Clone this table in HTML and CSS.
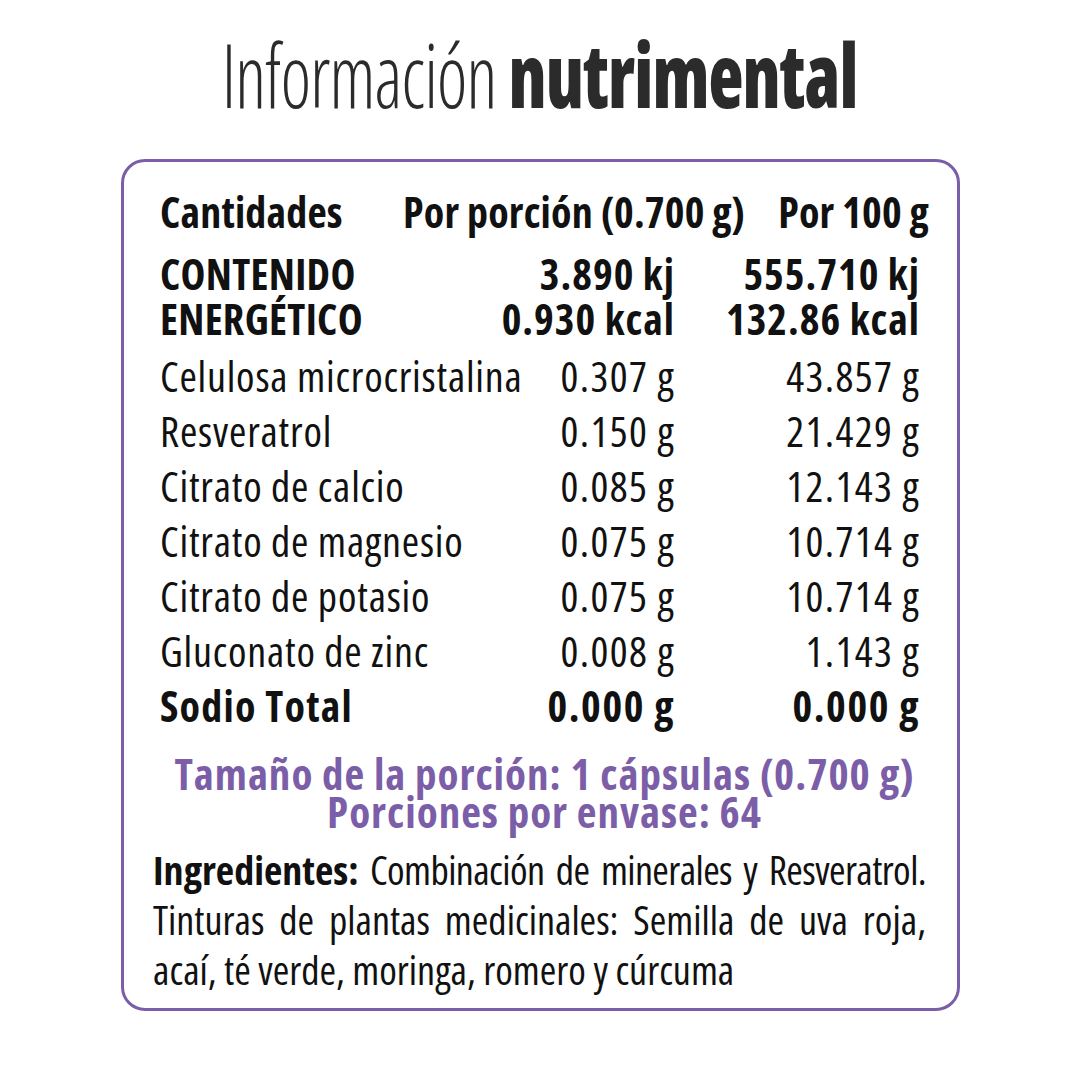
FILE: index.html
```html
<!DOCTYPE html>
<html lang="es">
<head>
<meta charset="utf-8">
<title>Información nutrimental</title>
<link rel="stylesheet" href="styles.css">
</head>
<body>
<h1 class="title"><span class="title-inner"><span class="light">Información</span> <span class="heavy">nutrimental</span></span></h1>
<section class="panel">
  <div class="head">
    <span>Cantidades</span>
    <span>Por porción (0.700 g)</span>
    <span class="head-end">Por 100 g</span>
  </div>
  <div class="energy">
    <div class="cell">CONTENIDO<br>ENERGÉTICO</div>
    <div class="cell num">3.890 kj<br>0.930 kcal</div>
    <div class="cell num">555.710 kj<br>132.86 kcal</div>
  </div>
  <div class="rows">
    <div class="cell">Celulosa microcristalina</div><div class="cell num">0.307 g</div><div class="cell num">43.857 g</div>
    <div class="cell">Resveratrol</div><div class="cell num">0.150 g</div><div class="cell num">21.429 g</div>
    <div class="cell">Citrato de calcio</div><div class="cell num">0.085 g</div><div class="cell num">12.143 g</div>
    <div class="cell">Citrato de magnesio</div><div class="cell num">0.075 g</div><div class="cell num">10.714 g</div>
    <div class="cell">Citrato de potasio</div><div class="cell num">0.075 g</div><div class="cell num">10.714 g</div>
    <div class="cell">Gluconato de zinc</div><div class="cell num">0.008 g</div><div class="cell num">1.143 g</div>
    <div class="cell bold">Sodio Total</div><div class="cell num bold">0.000 g</div><div class="cell num bold">0.000 g</div>
  </div>
  <div class="serving">
    <div>Tamaño de la porción: 1 cápsulas (0.700 g)</div>
    <div>Porciones por envase: 64</div>
  </div>
  <div class="ingredients">
    <span class="line first"><b>Ingredientes:</b> Combinación de minerales y Resveratrol.</span>
    <span class="line">Tinturas de plantas medicinales: Semilla de uva roja,</span>
    <span class="last">acaí, té verde, moringa, romero y cúrcuma</span>
  </div>
</section>
</body>
</html>
```
FILE: styles.css
```css
html, body {
  margin: 0;
  padding: 0;
  background: #ffffff;
}
body {
  width: 1080px;
  height: 1080px;
  font-family: "Open Sans", "DejaVu Sans", sans-serif;
  font-stretch: 75%;
  color: #111111;
}
.title {
  margin: 24px 0 35px;
  text-align: center;
  font-size: 88px;
  line-height: 100px;
  color: #2b2b2b;
  letter-spacing: -1px;
}
.title-inner {
  display: inline-block;
  transform: scaleX(0.82);
  white-space: nowrap;
}
.title .light { font-weight: 350; }
.title .heavy { font-weight: 800; }
.panel {
  margin: 0 120px 0 121px;
  border: 3px solid #7b5ea7;
  border-radius: 24px;
  padding: 22px 28px 13px 36px;
  height: 852px;
  box-sizing: border-box;
}
.head {
  display: grid;
  grid-template-columns: 243px auto 1fr;
  font-size: 42px;
  line-height: 55px;
  font-weight: 700;
  letter-spacing: 0.2px;
  white-space: nowrap;
}
.head-end { text-align: right; }
.energy, .rows {
  display: grid;
  margin-right: 9px;
  font-size: 42px;
}
.energy {
  grid-template-columns: auto 1fr 245px;
  margin-top: 12px;
  line-height: 45px;
  font-weight: 700;
  letter-spacing: 1px;
}
.energy .cell:first-child { letter-spacing: 0.3px; }
.rows {
  grid-template-columns: auto 1fr 245px;
  margin-top: 7px;
  line-height: 55px;
  letter-spacing: 0.8px;
}
.cell { white-space: nowrap; }
.num { text-align: right; }
.rows .num { letter-spacing: 1.4px; }
.rows .bold { font-weight: 700; letter-spacing: 1.2px; }
.rows .num.bold { letter-spacing: 1.6px; }
.serving {
  margin-top: 22px;
  text-align: center;
  color: #7b5ea7;
  font-weight: 700;
  font-size: 43px;
  line-height: 38px;
  letter-spacing: 1px;
}
.ingredients {
  margin: 14px 3px 0 -7px;
  font-size: 40px;
  line-height: 50px;
}
.ingredients .line {
  display: block;
  text-align: justify;
  text-align-last: justify;
}
.ingredients .first { letter-spacing: -0.6px; white-space: nowrap; }
.ingredients .last { display: block; }
.ingredients b { font-weight: 700; letter-spacing: 0; }
```
